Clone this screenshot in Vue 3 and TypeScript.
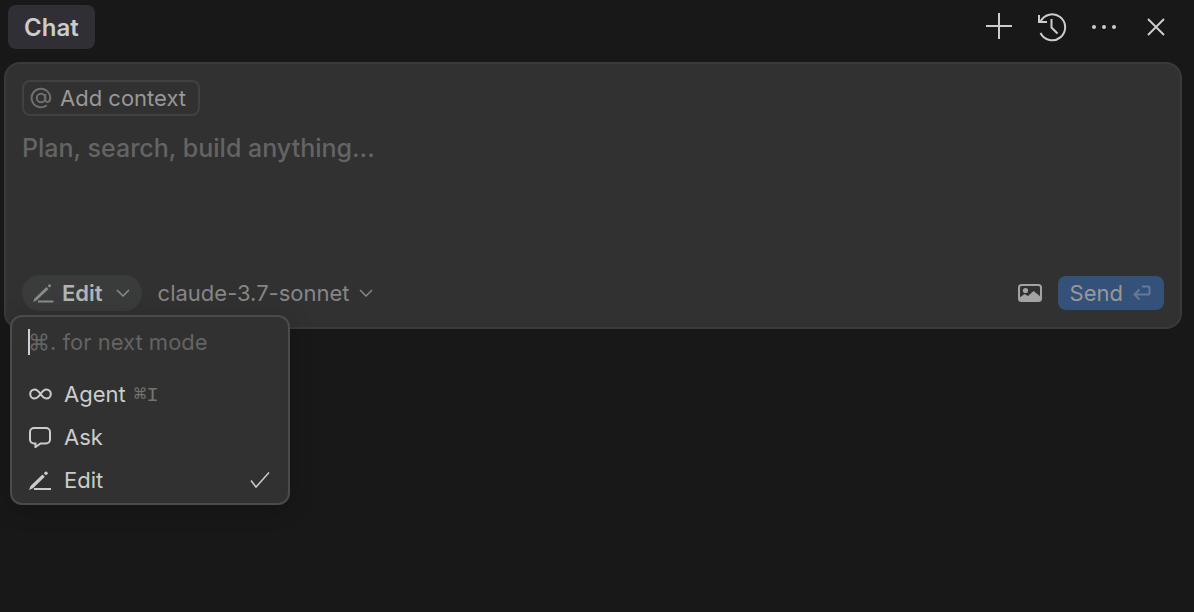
<script setup lang="ts">
import { ref } from 'vue'

interface Mode {
  id: string
  label: string
  command?: boolean
  key?: string
}

const modes: Mode[] = [
  { id: 'agent', label: 'Agent', command: true, key: 'I' },
  { id: 'ask', label: 'Ask' },
  { id: 'edit', label: 'Edit' },
]
const models: string[] = ['claude-3.7-sonnet']

const current = ref('edit')
const model = ref(models[0])
const draft = ref('')
const query = ref('')
const open = ref(true)

function choose(id: string): void {
  current.value = id
  open.value = false
}
</script>

<template>
  <main class="panel">
    <header class="bar">
      <button class="tab" type="button">Chat</button>
      <nav class="actions" aria-label="Chat actions">
        <button type="button" aria-label="New chat">
          <svg width="28" height="28" viewBox="0 0 28 28"><path d="M13 0v26M0 13h26" /></svg>
        </button>
        <button type="button" aria-label="History">
          <svg width="30" height="30" viewBox="0 0 30 30">
            <path d="M3.400 9.800A13 13 0 1 1 3.500 21M2 3v7h8M14.500 7v8.500l6 6" />
          </svg>
        </button>
        <button type="button" aria-label="More">
          <svg class="solid" width="26" height="6" viewBox="0 0 26 6">
            <circle cx="3" cy="3" r="2" /><circle cx="13" cy="3" r="2" /><circle cx="23" cy="3" r="2" />
          </svg>
        </button>
        <button type="button" aria-label="Close">
          <svg width="18" height="18" viewBox="0 0 18 18"><path d="M1 1l16 16M17 1L1 17" /></svg>
        </button>
      </nav>
    </header>

    <form class="composer" @submit.prevent>
      <button class="context" type="button">
        <svg class="at" width="22" height="22" viewBox="0 0 22 22">
          <circle cx="11" cy="11" r="4.200" />
          <path d="M15.200 7v5.300c0 3.700 5 3.700 5-1.300A9.300 9.300 0 1 0 16.800 18.200" />
        </svg>
        <span>Add context</span>
      </button>

      <textarea v-model="draft" class="prompt" aria-label="Prompt" placeholder="Plan, search, build anything..."></textarea>

      <div class="footer">
        <div class="mode">
          <button class="pill" type="button" aria-haspopup="listbox" :aria-expanded="open" @click="open = !open">
            <svg class="pen" width="22" height="20" viewBox="0 0 22 20">
              <path class="tip" d="M1 19l1.500-3.500L14.500 4l2 2L4.500 17.500z" />
              <circle class="tip" cx="17.500" cy="2.800" r="1.500" />
              <path d="M6 18.500h15.500" />
            </svg>
            <span>Edit</span>
            <svg class="chevron" width="14" height="8" viewBox="0 0 14 8"><path d="M1 1l6 6 6-6" /></svg>
          </button>

          <div v-if="open" class="menu">
            <div class="search">
              <span class="caret"></span>
              <input v-model="query" type="text" aria-label="Find a mode" placeholder="⌘. for next mode">
            </div>
            <ul role="listbox" aria-label="Mode">
              <li v-for="m in modes" :key="m.id">
                <button class="option" type="button" role="option" :aria-selected="m.id === current" @click="choose(m.id)">
                  <svg v-if="m.id === 'agent'" class="glyph" width="24" height="20" viewBox="0 0 24 20">
                    <path d="M12.500 10C10.500 7.200 9 5.500 6.700 5.500a4.500 4.500 0 0 0 0 9c2.300 0 3.800-1.700 5.800-4.500s3.500-4.500 5.800-4.500a4.500 4.500 0 0 1 0 9c-2.300 0-3.800-1.700-5.800-4.500z" />
                  </svg>
                  <svg v-else-if="m.id === 'ask'" class="glyph" width="24" height="22" viewBox="0 0 24 22">
                    <path d="M6 2h12a4 4 0 0 1 4 4v7.500a4 4 0 0 1-4 4h-5.500L7.500 21v-3.500H6a4 4 0 0 1-4-4V6a4 4 0 0 1 4-4z" />
                  </svg>
                  <svg v-else class="glyph" width="24" height="20" viewBox="0 0 24 20">
                    <path class="tip" d="M1 20l1.500-4L14.500 4.500l2.300 2.300L5 18.300z" />
                    <circle class="tip" cx="18" cy="3.300" r="1.700" />
                    <path d="M6 19h17" />
                  </svg>
                  <span>{{ m.label }}</span>
                  <kbd v-if="m.command">⌘{{ m.key }}</kbd>
                  <svg v-if="m.id === current" class="check" width="20" height="18" viewBox="0 0 20 18">
                    <path d="M1 9.500l5 6.500L19 1.500" />
                  </svg>
                </button>
              </li>
            </ul>
          </div>
        </div>

        <label class="model">
          <select v-model="model" aria-label="Model">
            <option v-for="name in models" :key="name" :value="name">{{ name }}</option>
          </select>
          <svg class="chevron" width="14" height="8" viewBox="0 0 14 8"><path d="M1 1l6 6 6-6" /></svg>
        </label>

        <button class="image" type="button" aria-label="Attach image">
          <svg width="24" height="18" viewBox="0 0 24 18">
            <rect class="frame" x="1" y="1" width="22" height="16" rx="2.500" />
            <circle cx="7.500" cy="6.500" r="2.600" />
            <path d="M1 14l5.500-4 3.500 2 5.500-5 7.500 6v3.500H1z" />
          </svg>
        </button>
        <button class="send" type="submit">
          <span>Send</span>
          <svg width="18" height="16" viewBox="0 0 18 16">
            <path d="M9 1.500h6.500a1 1 0 0 1 1 1v6a1 1 0 0 1-1 1H2M6.500 4.500l-5 5 5 5" />
          </svg>
        </button>
      </div>
    </form>
  </main>
</template>

<style>
body {
  margin: 0;
  background: #181818;
}
</style>

<style scoped>
.panel {
  min-height: 100vh;
  box-sizing: border-box;
  padding: 5px 12px 0 4px;
  background: #181818;
  color: #cccccc;
  font-family: Inter, "DejaVu Sans", sans-serif;
  font-size: 22px;
  line-height: 28px;
}

button,
input,
select,
textarea {
  margin: 0;
  padding: 0;
  border: 0;
  outline: 0;
  background: none;
  color: inherit;
  font: inherit;
}

svg {
  display: block;
  flex: none;
  fill: none;
  stroke: currentColor;
  stroke-width: 2;
}

.bar {
  display: flex;
  align-items: center;
  justify-content: space-between;
  height: 44px;
  margin-bottom: 13px;
  padding-left: 4px;
}

.tab {
  height: 44px;
  padding: 2px 16px 0;
  border-radius: 8px;
  background: #302f35;
  font-size: 24px;
  font-weight: 600;
}

.actions {
  display: flex;
}

.actions button {
  display: flex;
  align-items: center;
  justify-content: center;
  width: 52px;
  height: 44px;
}

.actions .solid {
  fill: currentColor;
  stroke: none;
}

.composer {
  padding: 16px;
  border: 2px solid #3a3a3a;
  border-radius: 16px;
  background: #313131;
}

.context {
  display: flex;
  align-items: center;
  gap: 8px;
  height: 36px;
  padding: 0 12px 0 6px;
  border: 2px solid #414141;
  border-radius: 8px;
  color: #989898;
}

.at {
  color: #6f6f6f;
}

.prompt {
  display: block;
  width: 100%;
  height: 128px;
  margin: 16px 0 15px;
  resize: none;
  font-size: 25px;
  font-weight: 500;
  line-height: 32px;
}

.prompt::placeholder,
.search input::placeholder {
  color: #646464;
  opacity: 1;
}

.footer {
  display: flex;
  align-items: center;
}

.mode {
  position: relative;
}

.pill {
  display: flex;
  align-items: center;
  gap: 8px;
  height: 36px;
  padding: 0 12px 0 10px;
  border-radius: 18px;
  background: #3a3c3b;
  color: #b4b4b4;
  font-weight: 600;
}

.pill .chevron {
  margin-left: 5px;
}

.pill svg {
  color: #8a8a8a;
}

.tip {
  fill: currentColor;
  stroke: none;
}

.chevron {
  stroke-width: 1.5;
}

.model {
  display: flex;
  align-items: center;
  gap: 9px;
  margin-left: 16px;
  color: #868686;
}

.model select {
  appearance: none;
}

.image {
  margin-left: auto;
  margin-right: 16px;
  color: #a3a3a3;
}

.image svg {
  fill: currentColor;
  stroke: none;
}

.image .frame {
  fill: none;
  stroke: currentColor;
}

.send {
  display: flex;
  align-items: center;
  gap: 10px;
  height: 34px;
  padding: 0 13px 0 12px;
  border-radius: 8px;
  background: #345179;
  color: #989898;
}

.send svg {
  color: #667a97;
}

.menu {
  position: absolute;
  z-index: 1;
  top: 40px;
  left: -12px;
  box-sizing: border-box;
  width: 280px;
  padding: 8px 0 2px;
  border: 2px solid #4b4b4b;
  border-radius: 12px;
  background: #313131;
  color: #cccccc;
  box-shadow: 0 4px 24px rgba(0, 0, 0, 0.2);
}

.search {
  display: flex;
  align-items: center;
  height: 34px;
  margin-bottom: 13px;
  padding: 0 16px;
}

.search input {
  flex: 1;
  min-width: 0;
}

.caret {
  width: 2px;
  height: 26px;
  margin-right: -2px;
  background: #d0d0d0;
}

.menu ul {
  margin: 0;
  padding: 0;
  list-style: none;
}

.option {
  display: flex;
  align-items: center;
  width: 100%;
  height: 43px;
  padding: 0 18px 0 16px;
}

.glyph {
  margin-right: 12px;
}

.option kbd {
  margin-left: 8px;
  padding-top: 4px;
  color: #737373;
  font-family: "Liberation Mono", "DejaVu Sans Mono", monospace;
  font-size: 21px;
}

.check {
  margin-left: auto;
  stroke-width: 1.5;
}
</style>
